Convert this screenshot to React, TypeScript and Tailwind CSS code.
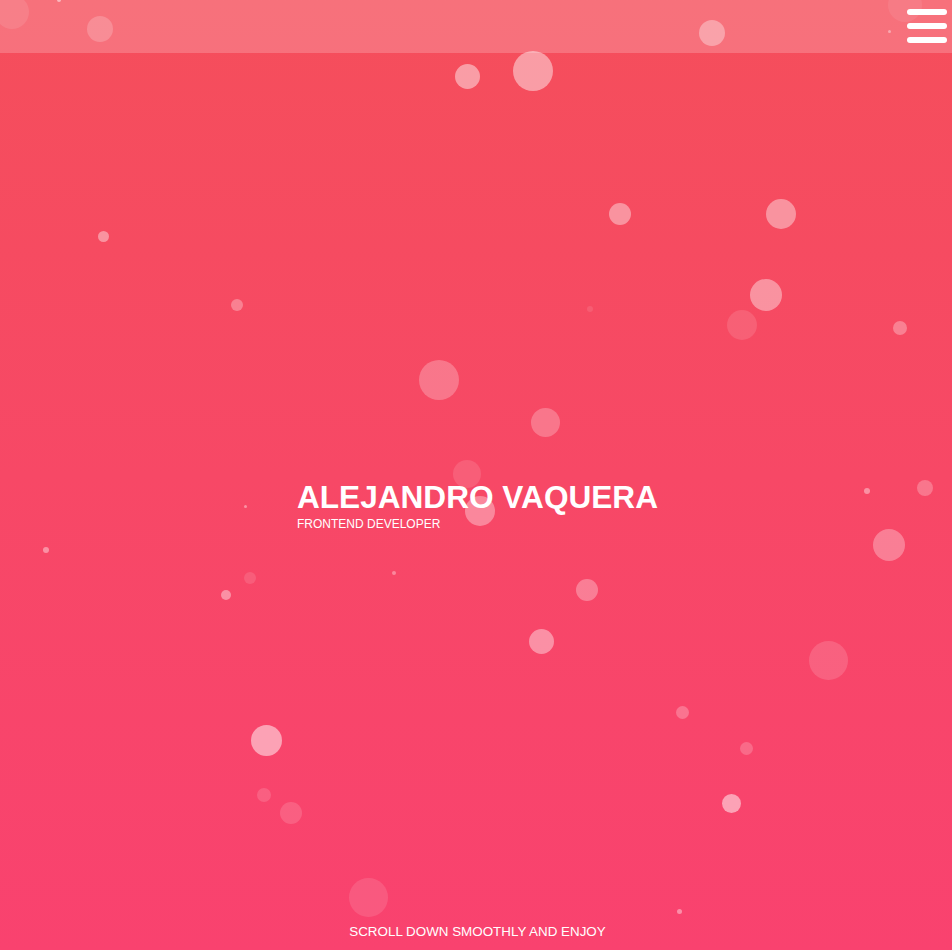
import React from "react";

type B = [number, number, number, number];
// cx, cy, r, opacity
const bubbles: B[] = [
  [12, 12, 17, 0.1],
  [59, 0, 2, 0.5],
  [100, 29, 13, 0.2],
  [712, 33, 13, 0.35],
  [905, 5, 17, 0.08],
  [889, 31, 1.5, 0.4],
  [467, 76, 12.5, 0.45],
  [533, 71, 20, 0.45],
  [620, 214, 11, 0.4],
  [781, 214, 15, 0.4],
  [103, 236, 5.5, 0.4],
  [237, 305, 6, 0.3],
  [766, 295, 16, 0.4],
  [742, 325, 15, 0.12],
  [590, 309, 3, 0.1],
  [900, 328, 7, 0.3],
  [439, 380, 20, 0.25],
  [545, 422, 14.5, 0.25],
  [467, 474, 14, 0.12],
  [480, 511, 15, 0.35],
  [245, 506, 1.5, 0.4],
  [867, 491, 3, 0.4],
  [925, 488, 8, 0.25],
  [889, 545, 16, 0.3],
  [46, 550, 3, 0.4],
  [250, 578, 6, 0.12],
  [226, 595, 5, 0.4],
  [394, 573, 1.8, 0.35],
  [587, 590, 11, 0.3],
  [541, 641, 12.5, 0.4],
  [828, 660, 19.5, 0.15],
  [682, 712, 6.5, 0.25],
  [266, 740, 15.5, 0.5],
  [746, 748, 6.5, 0.2],
  [264, 795, 7, 0.15],
  [291, 813, 11, 0.15],
  [731, 803, 9.5, 0.5],
  [368, 897, 19.5, 0.12],
  [679, 911, 2.5, 0.4],
];

export default function App() {
  return (
    <div
      className="relative w-full h-[950px] overflow-hidden bg-linear-to-b from-[#f54e5b] via-[#f74866] to-[#f9426f] text-white"
      style={{ fontFamily: '"Liberation Sans", Arial, sans-serif' }}
    >
      {bubbles.map(([x, y, r, o], i) => (
        <div
          key={i}
          className="absolute rounded-full bg-white"
          style={{ left: x - r, top: y - r, width: r * 2, height: r * 2, opacity: o }}
        />
      ))}
      <header className="absolute top-0 left-0 right-0 h-[53px] bg-white/20 flex justify-end items-start pt-[9px] pr-[5px]">
        <button className="flex flex-col gap-[8px]">
          <span className="block w-[40px] h-[6px] rounded-full bg-white" />
          <span className="block w-[40px] h-[6px] rounded-full bg-white" />
          <span className="block w-[40px] h-[6px] rounded-full bg-white" />
        </button>
      </header>
      <div className="absolute inset-0 flex items-center justify-center pt-[61px] pl-[3px]">
        <div className="text-left">
          <h1 className="text-[31.6px] leading-[32px] font-bold">ALEJANDRO VAQUERA</h1>
          <p className="mt-[4px] text-[12px] leading-[14px]">FRONTEND DEVELOPER</p>
        </div>
      </div>
      <div className="absolute bottom-[10px] left-0 right-0 text-center pl-[3px] text-[13.4px] leading-[16px]">
        SCROLL DOWN SMOOTHLY AND ENJOY
      </div>
    </div>
  );
}
